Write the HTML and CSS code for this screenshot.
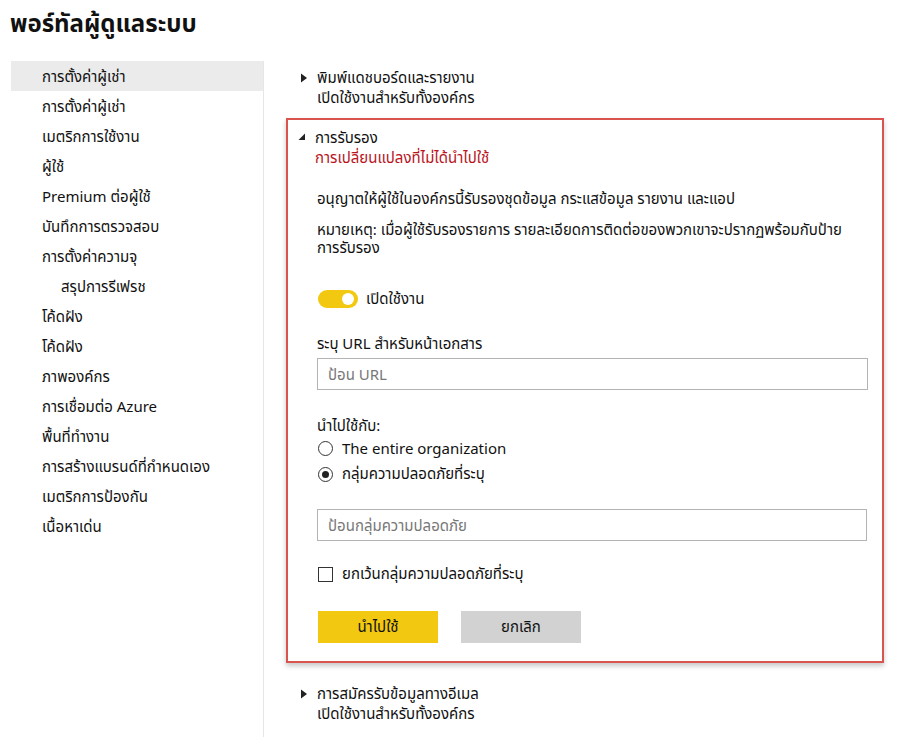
FILE: index.html
```html
<!DOCTYPE html>
<html lang="th">
<head>
<meta charset="utf-8">
<title>พอร์ทัลผู้ดูแลระบบ</title>
<link rel="stylesheet" href="styles.css">
</head>
<body>
<h1 class="page-title">พอร์ทัลผู้ดูแลระบบ</h1>
<div class="layout">
  <nav class="sidebar">
    <div class="nav-item selected">การตั้งค่าผู้เช่า</div>
    <div class="nav-item">การตั้งค่าผู้เช่า</div>
    <div class="nav-item">เมตริกการใช้งาน</div>
    <div class="nav-item">ผู้ใช้</div>
    <div class="nav-item">Premium ต่อผู้ใช้</div>
    <div class="nav-item">บันทึกการตรวจสอบ</div>
    <div class="nav-item">การตั้งค่าความจุ</div>
    <div class="nav-item sub">สรุปการรีเฟรช</div>
    <div class="nav-item">โค้ดฝัง</div>
    <div class="nav-item">โค้ดฝัง</div>
    <div class="nav-item">ภาพองค์กร</div>
    <div class="nav-item">การเชื่อมต่อ Azure</div>
    <div class="nav-item">พื้นที่ทำงาน</div>
    <div class="nav-item">การสร้างแบรนด์ที่กำหนดเอง</div>
    <div class="nav-item">เมตริกการป้องกัน</div>
    <div class="nav-item">เนื้อหาเด่น</div>
  </nav>
  <main class="content">
    <section class="setting collapsed first">
      <svg class="caret" width="8" height="10" viewBox="0 0 8 10"><path d="M1 0.5 L7 5 L1 9.5 Z" fill="#222"/></svg>
      <div class="setting-text">
        <div class="setting-title">พิมพ์แดชบอร์ดและรายงาน</div>
        <div class="setting-sub">เปิดใช้งานสำหรับทั้งองค์กร</div>
      </div>
    </section>

    <section class="setting expanded">
      <div class="setting-head">
        <svg class="caret" width="8" height="10" viewBox="0 0 8 10"><path d="M7 1.5 L7 8 L0.5 8 Z" fill="#222"/></svg>
        <div class="setting-text">
          <div class="setting-title">การรับรอง</div>
          <div class="setting-warn">การเปลี่ยนแปลงที่ไม่ได้นำไปใช้</div>
        </div>
      </div>
      <div class="setting-body">
        <p class="desc">อนุญาตให้ผู้ใช้ในองค์กรนี้รับรองชุดข้อมูล กระแสข้อมูล รายงาน และแอป</p>
        <p class="note">หมายเหตุ: เมื่อผู้ใช้รับรองรายการ รายละเอียดการติดต่อของพวกเขาจะปรากฏพร้อมกับป้าย การรับรอง</p>

        <div class="toggle-row">
          <span class="toggle"><span class="knob"></span></span>
          <span class="toggle-label">เปิดใช้งาน</span>
        </div>

        <div class="field-label">ระบุ URL สำหรับหน้าเอกสาร</div>
        <div class="input">ป้อน URL</div>

        <div class="field-label apply-label">นำไปใช้กับ:</div>
        <div class="radio-row"><span class="radio"></span><span>The entire organization</span></div>
        <div class="radio-row"><span class="radio checked"></span><span>กลุ่มความปลอดภัยที่ระบุ</span></div>

        <div class="input group-input">ป้อนกลุ่มความปลอดภัย</div>

        <div class="check-row"><span class="checkbox"></span><span>ยกเว้นกลุ่มความปลอดภัยที่ระบุ</span></div>

        <div class="buttons">
          <button class="btn primary">นำไปใช้</button>
          <button class="btn secondary">ยกเลิก</button>
        </div>
      </div>
    </section>

    <section class="setting collapsed last">
      <svg class="caret" width="8" height="10" viewBox="0 0 8 10"><path d="M1 0.5 L7 5 L1 9.5 Z" fill="#222"/></svg>
      <div class="setting-text">
        <div class="setting-title">การสมัครรับข้อมูลทางอีเมล</div>
        <div class="setting-sub">เปิดใช้งานสำหรับทั้งองค์กร</div>
      </div>
    </section>
  </main>
</div>
</body>
</html>
```

FILE: styles.css
```css
* { box-sizing: border-box; }
html, body { margin: 0; padding: 0; background: #fff; }
body {
  font-family: "Noto Sans", "Noto Sans Thai", "Liberation Sans", sans-serif;
  font-size: 15px;
  color: #111;
  width: 905px;
  height: 737px;
  overflow: hidden;
}
.page-title {
  margin: 0;
  padding: 6px 0 0 10px;
  height: 61px;
  font-size: 24px;
  font-weight: 700;
  line-height: 34px;
  color: #111;
}
.layout { display: flex; align-items: stretch; height: 676px; }
.sidebar {
  width: 264px;
  padding-left: 11px;
  border-right: 1px solid #e6e6e6;
}
.nav-item {
  height: 30px;
  line-height: 30px;
  padding-left: 31px;
  white-space: nowrap;
}
.nav-item.selected { background: #ebebeb; }
.nav-item.sub { padding-left: 50px; }

.content { flex: 1; padding: 6px 0 0 22px; }
.setting { display: flex; }
.caret { flex: none; margin: 6px 0 0 14px; }
.setting-text { margin-left: 9px; }
.setting-title { line-height: 20px; }
.setting-sub { line-height: 21px; }
.collapsed.first { height: 51px; }

.setting.expanded {
  display: block;
  width: 598px;
  border: 2px solid #d9534f;
  box-shadow: 0 3px 5px rgba(0,0,0,0.22);
  padding: 7px 0 18px 0;
}
.setting-head { display: flex; }
.setting-head .caret { margin-left: 10px; margin-top: 5px; }
.setting-warn { color: #b8141c; line-height: 20px; }
.setting-body { padding-left: 29px; padding-right: 14px; }
.desc { margin: 21px 0 0; line-height: 20px; }
.note { margin: 12px 0 0; line-height: 18px; padding-right: 10px; }

.toggle-row { display: flex; align-items: center; margin-top: 33px; height: 20px; }
.toggle {
  position: relative;
  width: 40px; height: 18px;
  border-radius: 9px;
  background: #f2c811;
  margin-left: 1px;
}
.knob {
  position: absolute;
  right: 4px; top: 3px;
  width: 12px; height: 12px;
  border-radius: 50%;
  background: #fff;
}
.toggle-label { margin-left: 8px; }

.field-label { margin-top: 24px; line-height: 20px; }
.input {
  margin-top: 5px;
  height: 32px;
  width: 551px;
  border: 1px solid #b3b3b3;
  color: #777;
  padding-left: 10px;
  line-height: 30px;
}
.apply-label { margin-top: 25px; }
.radio-row, .check-row { display: flex; align-items: center; height: 26px; }
.radio {
  width: 15px; height: 15px;
  border: 1px solid #333;
  border-radius: 50%;
  margin: 0 9px 0 1px;
  position: relative;
}
.radio.checked::after {
  content: "";
  position: absolute;
  left: 3px; top: 3px;
  width: 7px; height: 7px;
  border-radius: 50%;
  background: #222;
}
.group-input { margin-top: 22px; width: 550px; }
.check-row { margin-top: 20px; }
.checkbox {
  width: 15px; height: 15px;
  border: 1px solid #333;
  margin: 0 9px 0 1px;
}
.buttons { display: flex; margin-top: 24px; gap: 23px; padding-left: 1px; }
.btn {
  width: 120px; height: 32px;
  border: none;
  font: inherit;
  color: #111;
  padding: 0;
}
.btn.primary { background: #f2c811; }
.btn.secondary { background: #d2d2d2; }

.collapsed.last { margin-top: 20px; }
```
